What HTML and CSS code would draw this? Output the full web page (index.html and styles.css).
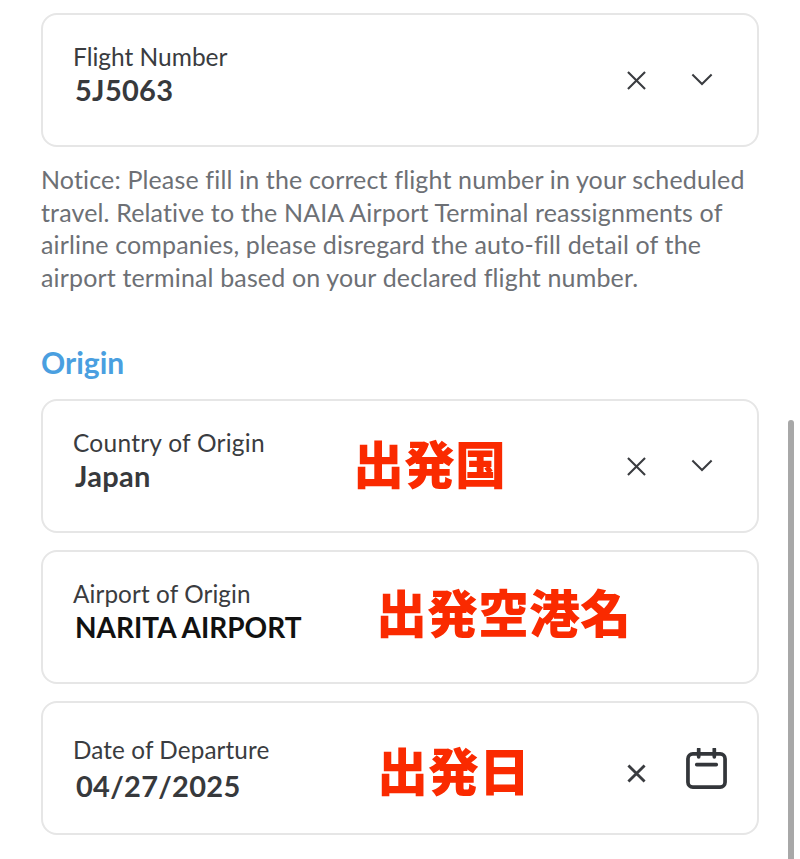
FILE: index.html
```html
<!DOCTYPE html>
<html lang="en">
<head>
<meta charset="utf-8">
<title>Flight details</title>
<link rel="stylesheet" href="styles.css">
</head>
<body>
<main class="form">
  <section class="card card-first">
    <div class="field field-raised">
      <span class="label">Flight Number</span>
      <span class="value">5J5063</span>
    </div>
    <div class="actions">
      <svg class="icon" viewBox="0 0 20 20"><path d="M1 1 19 19M19 1 1 19"/></svg>
      <svg class="icon chevron" viewBox="0 0 24 14"><path d="M1.500 1.500 12 12 22.500 1.500"/></svg>
    </div>
  </section>

  <p class="notice">Notice: Please fill in the correct flight number in your scheduled travel. Relative to the NAIA Airport Terminal reassignments of airline companies, please disregard the auto-fill detail of the airport terminal based on your declared flight number.</p>

  <h2 class="heading">Origin</h2>

  <section class="card">
    <div class="field field-raised">
      <span class="label label-wide">Country of Origin</span>
      <span class="value">Japan</span>
    </div>
    <span class="note note-country" lang="ja">出発国</span>
    <div class="actions">
      <svg class="icon" viewBox="0 0 20 20"><path d="M1 1 19 19M19 1 1 19"/></svg>
      <svg class="icon chevron" viewBox="0 0 24 14"><path d="M1.500 1.500 12 12 22.500 1.500"/></svg>
    </div>
  </section>

  <section class="card">
    <div class="field field-raised">
      <span class="label label-small">Airport of Origin</span>
      <span class="value value-dark">NARITA AIRPORT</span>
    </div>
    <span class="note note-airport" lang="ja">出発空港名</span>
  </section>

  <section class="card">
    <div class="field">
      <span class="label label-small">Date of Departure</span>
      <span class="value value-spaced">04/27/2025</span>
    </div>
    <span class="note note-date" lang="ja">出発日</span>
    <div class="actions actions-date">
      <svg class="icon icon-bold" viewBox="0 0 20 20"><path d="M1.500 1.500 18.500 18.500M18.500 1.500 1.500 18.500"/></svg>
      <svg class="calendar" viewBox="0 0 42 42"><rect x="2" y="6" width="38" height="34" rx="5"/><path d="M13 1V9M29 1V9M11 17H31"/></svg>
    </div>
  </section>
</main>
<div class="scrollbar"></div>
</body>
</html>
```

FILE: styles.css
```css
* { box-sizing: border-box; }

html, body {
  margin: 0;
  height: 859px;
  overflow: hidden;
  background: #fff;
}

body {
  font-family: "Lato", "Noto Sans", sans-serif;
  position: relative;
}

.form {
  display: flex;
  flex-direction: column;
  width: 718px;
  margin-left: 41px;
  padding-top: 13px;
}

.card {
  position: relative;
  display: flex;
  align-items: center;
  justify-content: space-between;
  height: 134px;
  margin-bottom: 17px;
  padding: 0 30px;
  border: 2px solid #e6e6e6;
  border-radius: 16px;
  background: #fff;
}

.card-first {
  margin-bottom: 16px;
}

.field {
  display: flex;
  flex-direction: column;
}

.field-raised {
  margin-bottom: 14px;
}

.label {
  font-size: 24.500px;
  line-height: 33px;
  color: #3a3c40;
}

.label-wide {
  letter-spacing: 0.25px;
}

.label-small {
  font-size: 24.300px;
  letter-spacing: 0.1px;
}

.value {
  margin-left: 2px;
  font-size: 29px;
  line-height: 34px;
  font-weight: 700;
  color: #37393c;
  letter-spacing: 0.3px;
}

.value-dark {
  font-size: 28px;
  color: #111;
  letter-spacing: 0;
}

.value-spaced {
  margin-top: 3px;
  margin-left: 3px;
}

.actions {
  display: flex;
  align-items: center;
  gap: 45px;
  margin-right: 14px;
}

.icon {
  width: 19px;
  height: 19px;
  fill: none;
  stroke: #3a3c40;
  stroke-width: 2.200;
}

.chevron {
  width: 22px;
  height: 13px;
  margin-top: -1px;
}

.icon-bold {
  margin-top: 11px;
  stroke-width: 3;
}

.actions-date {
  gap: 40px;
  margin-right: 0;
}

.calendar {
  width: 41px;
  height: 41px;
  fill: none;
  stroke: #33363a;
  stroke-width: 3.800;
  stroke-linecap: round;
}

.notice {
  margin: 0;
  font-size: 25px;
  line-height: 32.500px;
  letter-spacing: 0.15px;
  color: #6d7075;
}

.heading {
  margin: 49px 0 17px;
  font-size: 30px;
  line-height: 40px;
  font-weight: 700;
  color: #4a9fe0;
}

.note {
  position: absolute;
  font-family: "Noto Sans CJK JP", sans-serif;
  font-size: 51px;
  line-height: 60px;
  font-weight: 900;
  color: #fa2a00;
  white-space: nowrap;
}

.note-country { left: 310px; top: 31px; }
.note-airport { left: 333px; top: 29px; }
.note-date { left: 334px; top: 36px; }

.scrollbar {
  position: absolute;
  left: 788px;
  top: 420px;
  width: 6px;
  height: 439px;
  border-radius: 3px 3px 0 0;
  background: #a8a8a8;
}
```
